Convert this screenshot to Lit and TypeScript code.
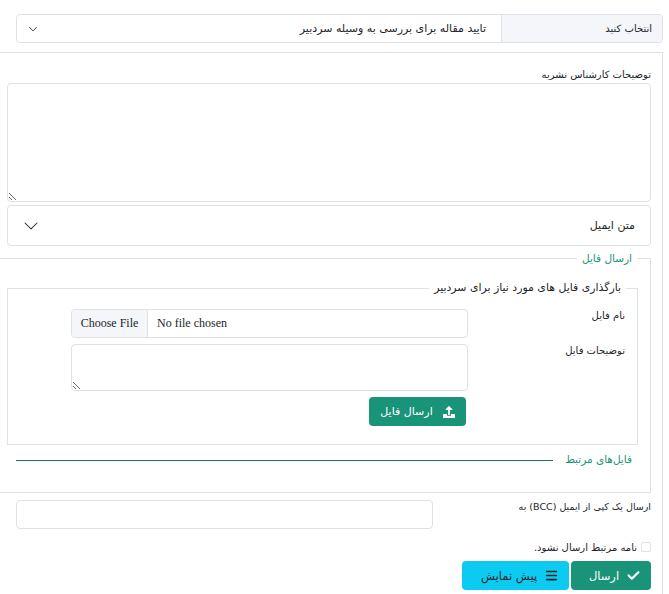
import { LitElement, html, css } from "lit";
import { customElement } from "lit/decorators.js";

@customElement("app-root")
export class AppRoot extends LitElement {
  static styles = css`
    :host { display: block; width: 669px; height: 594px; overflow: hidden; background: #fff; font-family: "DejaVu Sans", sans-serif; font-size: 11px; color: #212529; }
    * { box-sizing: border-box; }
    .page { direction: rtl; padding: 14px 6px 0 0; width: 669px; height: 594px; display: flex; flex-direction: column; }
    .group { display: flex; height: 29px; margin-left: 16px; border: 1px solid #dfe1e9; border-radius: 4px; flex: none; }
    .addon { width: 161px; background: #f5f6f9; border-left: 1px solid #dfe1e9; border-radius: 0 4px 4px 0; padding-right: 10px; display: flex; align-items: center; font-size: 10px; }
    .sel { flex: 1; display: flex; align-items: center; justify-content: space-between; padding: 0 15px 0 11px; }
    .panel { margin-top: 9px; margin-left: -10px; flex: 1; border: 1px solid #dfe1e9; border-left: 0; border-bottom: 0; padding: 15px 11px 0 0; display: flex; flex-direction: column; }
    .lbl { line-height: 14px; margin: 0; font-size: 10px; }
    .gap { margin-bottom: 1px; }
    textarea { display: block; border: 1px solid #dfe1e9; border-radius: 4px; background: #fff; outline: none; padding: 4px 8px; margin: 0; }
    .main-ta { width: 644px; height: 119px; }
    .acc { margin-top: 3px; width: 644px; height: 41px; flex: none; border: 1px solid #dfe1e9; border-radius: 4px; display: flex; align-items: center; justify-content: space-between; padding: 0 15px; }
    fieldset { margin: 0; min-width: 0; border: 1px solid #dfe1e9; }
    legend { font-size: 11px; line-height: 14px; }
    .outer { margin-top: 5px; width: 661px; height: 242px; padding: 16px 0 0 0; flex: none; border-radius: 0; }
    .outer > legend { color: #1a9479; margin-right: 13px; padding: 0 5px; font-size: 10.5px; }
    .inner { margin: 0 12px 0 0; width: 631px; height: 164px; padding: 0; border-radius: 0; }
    .inner > legend { margin-right: 11px; padding: 0 5px; font-size: 10.9px; }
    .form-grid { display: grid; grid-template-columns: 157px 397px; column-gap: 0; row-gap: 6px; padding: 14px 12px 0 0; }
    .file { display: block; width: 397px; height: 29px; direction: ltr; border: 1px solid #dfe1e9; border-radius: 4px; font-family: "Liberation Serif", serif; font-size: 12px; color: #212529; overflow: hidden; background: #fff; padding: 0; line-height: 27px; }
    .file::file-selector-button { height: 27px; width: 76px; margin: 0 9px 0 0; padding: 0; border: 0; border-right: 1px solid #dfe1e9; background: #f5f6f9; font: inherit; color: #212529; }
    .small-ta { width: 397px; height: 47px; }
    .btn { display: inline-flex; align-items: center; justify-content: center; gap: 9px; height: 29px; border: 0; border-radius: 4px; font-family: inherit; font-size: 11px; padding: 0; margin: 0; }
    .green { background: #1a9479; color: #fff; }
    .cyan { background: #0dcaf0; color: #212529; }
    .upload-row { grid-column: 2; display: flex; justify-content: flex-start; padding-right: 2px; }
    .upload { width: 97px; gap: 10px; }
    .related { display: flex; align-items: center; gap: 12px; margin: 7px 18px 0 0; width: 616px; }
    .related span { color: #1a9479; line-height: 14px; white-space: nowrap; font-size: 10.5px; }
    .related i { display: block; flex: 1; height: 1px; background: #1c6f5e; margin-top: 3px; }
    .bcc { display: flex; justify-content: space-between; width: 635px; margin-top: 7px; }
    .bcc .lbl { font-size: 9.5px; }
    .bcc input { width: 417px; height: 29px; border: 1px solid #dfe1e9; border-radius: 4px; background: #fff; outline: none; margin: 0; padding: 0; }
    .check { display: flex; align-items: center; gap: 4px; margin-top: 11px; height: 14px; }
    .box { width: 10px; height: 10px; border: 1px solid #dfe1e9; border-radius: 2px; background: #fff; flex: none; }
    .actions { display: flex; gap: 2px; margin-top: 7px; }
    .send { width: 80px; padding-left: 7px; font-size: 11.5px; gap: 8px; }
    .preview { width: 107px; padding-left: 8px; font-size: 11.5px; gap: 8px; }
    .text-small { font-size: 10px; }
  `;
  render() {
    return html`<div class="page">
      <div class="group">
        <div class="addon">انتخاب کنید</div>
        <div class="sel"><span>تایید مقاله برای بررسی به وسیله سردبیر</span>
          <svg width="10" height="10" viewBox="0 0 16 16" fill="none" stroke="#343a40" stroke-width="1.6" stroke-linecap="round" stroke-linejoin="round"><path d="M2.5 5.5L8 11l5.5-5.5"/></svg>
        </div>
      </div>
      <div class="panel">
        <p class="lbl gap">توضیحات کارشناس نشریه</p>
        <textarea class="main-ta"></textarea>
        <div class="acc"><span>متن ایمیل</span>
          <svg width="16" height="16" viewBox="0 0 16 16" fill="#212529"><path fill-rule="evenodd" d="M1.646 4.646a.5.5 0 0 1 .708 0L8 10.293l5.646-5.647a.5.5 0 0 1 .708.708l-6 6a.5.5 0 0 1-.708 0l-6-6a.5.5 0 0 1 0-.708z"/></svg>
        </div>
        <fieldset class="outer">
          <legend>ارسال فایل</legend>
          <fieldset class="inner">
            <legend>بارگذاری فایل های مورد نیاز برای سردبیر</legend>
            <div class="form-grid">
              <p class="lbl">نام فایل</p>
              <input class="file" type="file" />
              <p class="lbl">توضیحات فایل</p>
              <textarea class="small-ta"></textarea>
              <div class="upload-row">
                <button class="btn green upload">
                  <svg width="12" height="12" viewBox="0 0 512 512" fill="#fff"><path d="M216 368V168H130c-18 0-27-21-14-34L240 10c9-9 23-9 32 0l124 124c13 13 4 34-14 34h-86v200c0 13-11 24-24 24h-32c-13 0-24-11-24-24z"/><path d="M0 360c0-13 11-24 24-24h144v32c0 31 25 56 56 56h64c31 0 56-25 56-56v-32h144c13 0 24 11 24 24v128c0 13-11 24-24 24H24c-13 0-24-11-24-24z"/></svg>
                  <span>ارسال فایل</span>
                </button>
              </div>
            </div>
          </fieldset>
          <div class="related"><span>فایل‌های مرتبط</span><i></i></div>
        </fieldset>
        <div class="bcc">
          <p class="lbl">ارسال یک کپی از ایمیل (BCC) به</p>
          <input type="text" />
        </div>
        <div class="check"><span class="box"></span><span class="text-small">نامه مرتبط ارسال نشود.</span></div>
        <div class="actions">
          <button class="btn green send">
            <svg width="13" height="13" viewBox="0 0 512 512" fill="#fff" stroke="#fff" stroke-width="28"><path d="M470.6 105.4c12.5 12.5 12.5 32.8 0 45.3l-256 256c-12.5 12.5-32.8 12.5-45.3 0l-128-128c-12.5-12.5-12.5-32.8 0-45.3s32.8-12.5 45.3 0L192 338.7l233.4-233.3c12.5-12.5 32.8-12.5 45.3 0z"/></svg>
            <span>ارسال</span>
          </button>
          <button class="btn cyan preview">
            <svg width="13" height="13" viewBox="0 0 448 512" fill="#212529"><path d="M0 96c0-17.7 14.3-32 32-32h384c17.7 0 32 14.3 32 32s-14.3 32-32 32H32c-17.7 0-32-14.3-32-32zm0 160c0-17.7 14.3-32 32-32h384c17.7 0 32 14.3 32 32s-14.3 32-32 32H32c-17.7 0-32-14.3-32-32zm448 160c0 17.7-14.3 32-32 32H32c-17.7 0-32-14.3-32-32s14.3-32 32-32h384c17.7 0 32 14.3 32 32z"/></svg>
            <span>پیش نمایش</span>
          </button>
        </div>
      </div>
    </div>`;
  }
}
